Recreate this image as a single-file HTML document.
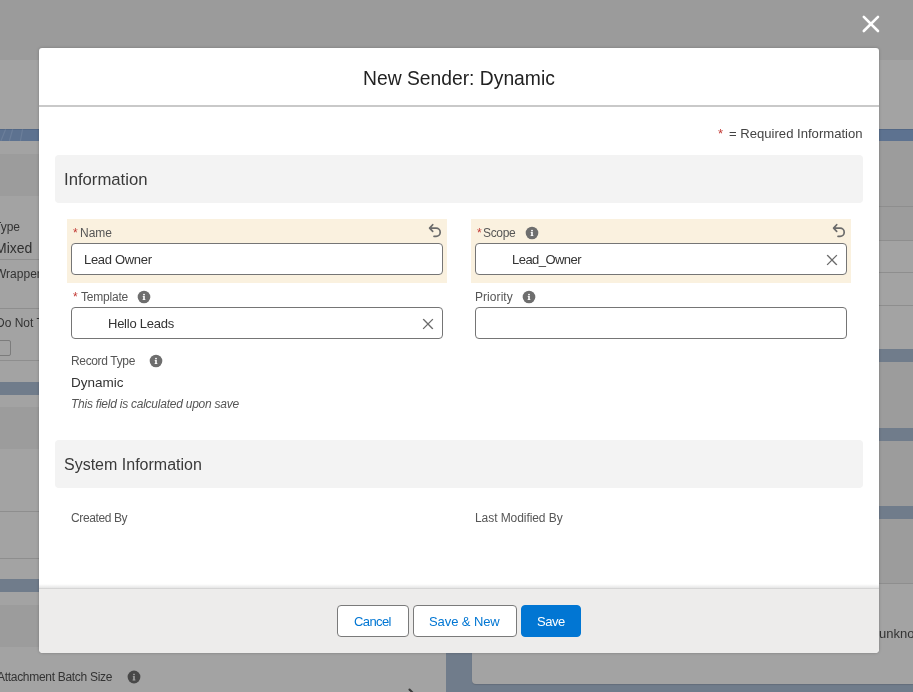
<!DOCTYPE html>
<html><head><meta charset="utf-8">
<style>
*{margin:0;padding:0;box-sizing:border-box}
html,body{width:913px;height:692px;overflow:hidden}
body{position:relative;background:#a3a3a3;font-family:"Liberation Sans",sans-serif;color:#3e3e3c}
.a{position:absolute}
.t{position:absolute;line-height:1;white-space:nowrap;will-change:transform}
.bg1{position:absolute;background:#9c9c9c}
.st{position:absolute;background:#707c8b}
.ln{position:absolute;background:#8e8e8e;height:1px}
.sec{position:absolute;background:#f3f3f3;border-radius:4px}
.hl{position:absolute;background:#faf1df}
.inp{position:absolute;background:#fff;border:1px solid #757575;border-radius:4px}
.ast{position:absolute;line-height:1;will-change:transform;font-size:12px;color:#c23934}
.btn{position:absolute;top:605px;height:32px;border-radius:4px;border:1px solid #7a7a7a;background:#fff}
</style></head><body>
<!-- background page -->
<div class="bg1" style="left:0;top:0;width:913px;height:60px;background:#9b9b9b"></div>
<div class="a" style="left:0;top:129px;width:913px;height:12px;background:#5d7290;border-top:1px solid #526785"></div>
<svg class="a" style="left:0;top:129px" width="40" height="12" viewBox="0 0 40 12"><path d="M5.7 0L0.9 12M12.7 0L9.4 12M22.6 0L20.4 12" stroke="rgba(255,255,255,.09)" stroke-width="1.2"/></svg>
<div class="bg1" style="left:0;top:154px;width:446px;height:42px"></div>
<div class="t" style="left:-6.5px;top:220.5px;font-size:12px;color:#333333">Type</div>
<div class="t" style="left:-5px;top:241px;font-size:14px;color:#303030">Mixed</div>
<div class="ln" style="left:0;top:259px;width:446px"></div>
<div class="t" style="left:-5px;top:268px;font-size:12px;color:#333333">Wrapper</div>
<div class="ln" style="left:0;top:308px;width:446px"></div>
<div class="t" style="left:-4px;top:317px;font-size:12px;color:#333333">Do Not Track</div>
<div class="a" style="left:-6px;top:340px;width:17px;height:16px;border:1px solid #7c7c7c;border-radius:2px"></div>
<div class="ln" style="left:0;top:360px;width:446px"></div>
<div class="st" style="left:0;top:382px;width:446px;height:13px"></div>
<div class="bg1" style="left:0;top:407px;width:446px;height:42px"></div>
<div class="ln" style="left:0;top:511px;width:446px"></div>
<div class="ln" style="left:0;top:558px;width:446px"></div>
<div class="st" style="left:0;top:579px;width:446px;height:13px"></div>
<div class="bg1" style="left:0;top:605px;width:446px;height:42px"></div>
<div class="t" style="left:-3px;top:671px;font-size:12px;letter-spacing:-0.3px;color:#333333">Attachment Batch Size</div>
<svg class="a" style="left:127px;top:670px" width="14" height="14" viewBox="0 0 14 14"><circle cx="7" cy="7" r="6.4" fill="#484848"/><rect x="6.2" y="3.8" width="1.6" height="1.4" fill="#a3a3a3"/><path d="M5.7 5.9H7.8V9.6H8.4V10.4H5.6V9.6H6.2V6.6H5.7Z" fill="#a3a3a3"/></svg>
<svg class="a" style="left:405px;top:685px" width="12" height="8" viewBox="0 0 12 8"><path d="M4.5 4.5L7.5 7.5" stroke="#3a3a3a" stroke-width="2" stroke-linecap="round"/></svg>
<div class="st" style="left:446px;top:141px;width:26px;height:551px"></div>
<div class="st" style="left:446px;top:670px;width:467px;height:22px"></div>
<div class="a" style="left:472px;top:600px;width:441px;height:84px;background:#a3a3a3;border-radius:0 0 0 4px;box-shadow:0 1px 1px rgba(0,0,0,.12)"></div>
<div class="bg1" style="left:472px;top:141px;width:441px;height:99px"></div>
<div class="ln" style="left:472px;top:206px;width:441px"></div>
<div class="ln" style="left:472px;top:240px;width:441px"></div>
<div class="ln" style="left:472px;top:272px;width:441px"></div>
<div class="ln" style="left:472px;top:305px;width:441px"></div>
<div class="st" style="left:472px;top:349px;width:441px;height:13px"></div>
<div class="bg1" style="left:472px;top:362px;width:441px;height:66px"></div>
<div class="st" style="left:472px;top:428px;width:441px;height:13px"></div>
<div class="bg1" style="left:472px;top:441px;width:441px;height:65px"></div>
<div class="st" style="left:472px;top:506px;width:441px;height:13px"></div>
<div class="bg1" style="left:472px;top:519px;width:441px;height:64px"></div>
<div class="ln" style="left:472px;top:583px;width:441px"></div>
<div class="t" style="left:879px;top:627px;font-size:13px;color:#333333">unknown</div>

<svg class="a" style="left:859px;top:12px" width="24" height="24" viewBox="0 0 24 24"><path d="M4.8 4.8L19 19M19 4.8L4.8 19" stroke="#fff" stroke-width="2.6" stroke-linecap="round"/></svg>

<!-- modal -->
<div class="a" style="left:39px;top:48px;width:840px;height:605px;background:#fff;border-radius:3px 3px 4px 4px;box-shadow:0 0 3px rgba(0,0,0,.25)"></div>
<div class="t" style="left:363.0px;top:69.0px;font-size:19.3px;letter-spacing:0.0px;color:#222222;">New Sender: Dynamic</div>
<div class="a" style="left:39px;top:105px;width:840px;height:2px;background:#c9c9c9"></div>
<div class="ast" style="left:718px;top:127px;font-size:13px">*</div>
<div class="t" style="left:729.0px;top:127.0px;font-size:13.1px;letter-spacing:0.0px;color:#444444;">= Required Information</div>
<div class="sec" style="left:55px;top:155px;width:808px;height:48px"></div>
<div class="t" style="left:63.7px;top:171.7px;font-size:16.7px;letter-spacing:0.0px;color:#3a3a3a;">Information</div>

<div class="hl" style="left:67px;top:219px;width:380px;height:64px"></div>
<div class="ast" style="left:73px;top:227px">*</div>
<div class="t" style="left:79.8px;top:226.8px;font-size:12.0px;letter-spacing:0.0px;color:#565656;">Name</div>
<svg class="a" style="left:424px;top:220px" width="22" height="22" viewBox="0 0 22 22"><path d="M8.7 4.7L5.6 8.1L8.7 11.3M6 8.1H12.1A4.1 4.1 0 0 1 12.1 16.3H10" fill="none" stroke="#6b6b6b" stroke-width="1.7" stroke-linecap="round" stroke-linejoin="round"/></svg>
<div class="inp" style="left:71px;top:243px;width:372px;height:32px"></div>
<div class="t" style="left:83.6px;top:252.5px;font-size:13.0px;letter-spacing:-0.31px;color:#333333;">Lead Owner</div>

<div class="hl" style="left:471px;top:219px;width:380px;height:64px"></div>
<div class="ast" style="left:477px;top:227px">*</div>
<div class="t" style="left:483.2px;top:227.0px;font-size:12.0px;letter-spacing:-0.33px;color:#565656;">Scope</div>
<svg class="a" style="left:525px;top:226px" width="14" height="14" viewBox="0 0 14 14"><circle cx="7" cy="7" r="6.3" fill="#6e6e6e"/><circle cx="7" cy="4.6" r="0.95" fill="#fff"/><path d="M5.7 6.1H7.8V9.3H8.4V10.1H5.6V9.3H6.2V6.8H5.7Z" fill="#fff"/></svg>
<svg class="a" style="left:828px;top:220px" width="22" height="22" viewBox="0 0 22 22"><path d="M8.7 4.7L5.6 8.1L8.7 11.3M6 8.1H12.1A4.1 4.1 0 0 1 12.1 16.3H10" fill="none" stroke="#6b6b6b" stroke-width="1.7" stroke-linecap="round" stroke-linejoin="round"/></svg>
<div class="inp" style="left:475px;top:243px;width:372px;height:32px"></div>
<div class="t" style="left:511.7px;top:252.5px;font-size:13.0px;letter-spacing:-0.54px;color:#333333;">Lead_Owner</div>
<svg class="a" style="left:825px;top:253px" width="14" height="14" viewBox="0 0 14 14"><path d="M2.6 2.6L11.4 11.4M11.4 2.6L2.6 11.4" stroke="#6b6b6b" stroke-width="1.35" stroke-linecap="square"/></svg>

<div class="ast" style="left:73px;top:291px">*</div>
<div class="t" style="left:80.7px;top:291.0px;font-size:12.0px;letter-spacing:-0.2px;color:#565656;">Template</div>
<svg class="a" style="left:137px;top:290px" width="14" height="14" viewBox="0 0 14 14"><circle cx="7" cy="7" r="6.3" fill="#6e6e6e"/><circle cx="7" cy="4.6" r="0.95" fill="#fff"/><path d="M5.7 6.1H7.8V9.3H8.4V10.1H5.6V9.3H6.2V6.8H5.7Z" fill="#fff"/></svg>
<div class="inp" style="left:71px;top:307px;width:372px;height:32px"></div>
<div class="t" style="left:107.8px;top:317.0px;font-size:13.0px;letter-spacing:-0.25px;color:#333333;">Hello Leads</div>
<svg class="a" style="left:421px;top:317px" width="14" height="14" viewBox="0 0 14 14"><path d="M2.6 2.6L11.4 11.4M11.4 2.6L2.6 11.4" stroke="#6b6b6b" stroke-width="1.35" stroke-linecap="square"/></svg>

<div class="t" style="left:474.7px;top:290.9px;font-size:12.0px;letter-spacing:0.06px;color:#565656;">Priority</div>
<svg class="a" style="left:522px;top:290px" width="14" height="14" viewBox="0 0 14 14"><circle cx="7" cy="7" r="6.3" fill="#6e6e6e"/><circle cx="7" cy="4.6" r="0.95" fill="#fff"/><path d="M5.7 6.1H7.8V9.3H8.4V10.1H5.6V9.3H6.2V6.8H5.7Z" fill="#fff"/></svg>
<div class="inp" style="left:475px;top:307px;width:372px;height:32px"></div>

<div class="t" style="left:71.0px;top:354.8px;font-size:12.0px;letter-spacing:-0.35px;color:#565656;">Record Type</div>
<svg class="a" style="left:149px;top:354px" width="14" height="14" viewBox="0 0 14 14"><circle cx="7" cy="7" r="6.3" fill="#6e6e6e"/><circle cx="7" cy="4.6" r="0.95" fill="#fff"/><path d="M5.7 6.1H7.8V9.3H8.4V10.1H5.6V9.3H6.2V6.8H5.7Z" fill="#fff"/></svg>
<div class="t" style="left:71.4px;top:375.7px;font-size:13.5px;letter-spacing:0.0px;color:#333333;">Dynamic</div>
<div class="t" style="left:71.0px;top:397.5px;font-size:12.0px;letter-spacing:-0.24px;color:#565656;font-style:italic">This field is calculated upon save</div>

<div class="sec" style="left:55px;top:440px;width:808px;height:48px"></div>
<div class="t" style="left:63.5px;top:457.0px;font-size:16.0px;letter-spacing:0.0px;color:#3a3a3a;">System Information</div>
<div class="t" style="left:71.4px;top:511.6px;font-size:12.0px;letter-spacing:-0.38px;color:#565656;">Created By</div>
<div class="t" style="left:474.8px;top:511.5px;font-size:12.0px;letter-spacing:-0.07px;color:#565656;">Last Modified By</div>

<div class="a" style="left:39px;top:584px;width:840px;height:4px;background:linear-gradient(rgba(0,0,0,0),rgba(0,0,0,.1))"></div>
<div class="a" style="left:39px;top:588px;width:840px;height:65px;background:#edeceb;border-top:1px solid #d5d5d5;border-radius:0 0 4px 4px"></div>
<div class="btn" style="left:337px;width:72px"></div>
<div class="btn" style="left:413px;width:104px"></div>
<div class="btn" style="left:521px;width:60px;background:#0176d3;border-color:#0176d3"></div>
<div class="t" style="left:354.0px;top:614.6px;font-size:13.0px;letter-spacing:-0.6px;color:#0176d3;">Cancel</div>
<div class="t" style="left:429.0px;top:614.6px;font-size:13.0px;letter-spacing:-0.09px;color:#0176d3;">Save &amp; New</div>
<div class="t" style="left:536.7px;top:614.6px;font-size:13.0px;letter-spacing:-0.46px;color:#ffffff;">Save</div>
</body></html>
